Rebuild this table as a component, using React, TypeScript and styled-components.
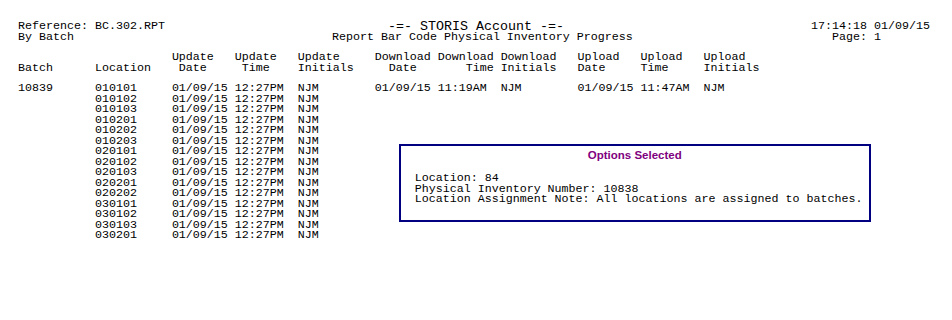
import React from "react";
import styled, { createGlobalStyle } from "styled-components";

const GlobalStyle = createGlobalStyle`
  html, body { margin: 0; padding: 0; background: #ffffff; }
  body { font-family: "Liberation Mono", "Courier New", monospace; color: #000000; }
`;

const Page = styled.div`
  width: 952px;
  height: 320px;
  box-sizing: border-box;
  padding: 21px 0 0 18px;
  font-family: "Liberation Mono", "Courier New", monospace;
  font-size: 11.6667px;
  color: #000;
  white-space: pre;
`;

const Masthead = styled.div`
  display: grid;
  grid-template-columns: 314px 479px auto;
  line-height: 11px;
`;

const MastColumn = styled.div`
  display: flex;
  flex-direction: column;
  align-items: flex-start;
`;

const Title = styled.div`
  font-size: 13.3333px;
  margin-left: 56px;
`;

const Line = styled.div<{ $indent?: number }>`
  padding-left: ${(p) => p.$indent ?? 0}ch;
`;

const Columns = "11ch 11ch 9ch 9ch 11ch 9ch 9ch 11ch 9ch 9ch auto";

const HeaderGrid = styled.div`
  display: grid;
  grid-template-columns: ${Columns};
  margin-top: 9px;
  line-height: 11px;
`;

const HeaderCell = styled.div`
  display: flex;
  flex-direction: column;
`;

const RowGrid = styled.div`
  display: grid;
  grid-template-columns: ${Columns};
  margin-top: 9.3px;
  line-height: 10.5px;
`;

const Lower = styled.div`
  display: flex;
  align-items: flex-start;
`;

const LocationGrid = styled.div`
  display: grid;
  grid-template-columns: 11ch 11ch 9ch 9ch 11ch;
  grid-auto-rows: 10.5px;
  line-height: 10.5px;
`;

const Cell = styled.div``;

const OptionsBox = styled.div`
  margin: 50px 0 0 24px;
  width: 472px;
  box-sizing: border-box;
  border: 2px solid #000080;
  padding: 2px 0 15px 14px;
  display: flex;
  flex-direction: column;
`;

const OptionsTitle = styled.div`
  font-family: "Liberation Sans", Arial, sans-serif;
  font-weight: bold;
  font-size: 11.5px;
  line-height: 14px;
  color: #800080;
  text-align: center;
  margin-left: -14px;
  margin-bottom: 11.6px;
`;

const OptionsLine = styled.div`
  line-height: 10.5px;
`;

const headers: [string, string, number][] = [
  ["", "Batch", 0],
  ["", "Location", 0],
  ["Update", "Date", 1],
  ["Update", "Time", 1],
  ["Update", "Initials", 0],
  ["Download", "Date", 2],
  ["Download", "Time", 4],
  ["Download", "Initials", 0],
  ["Upload", "Date", 0],
  ["Upload", "Time", 0],
  ["Upload", "Initials", 0],
];

const firstRow = [
  "10839",
  "010101",
  "01/09/15",
  "12:27PM",
  "NJM",
  "01/09/15",
  "11:19AM",
  "NJM",
  "01/09/15",
  "11:47AM",
  "NJM",
];

const locations = [
  "010102",
  "010103",
  "010201",
  "010202",
  "010203",
  "020101",
  "020102",
  "020103",
  "020201",
  "020202",
  "030101",
  "030102",
  "030103",
  "030201",
];

export default function App() {
  return (
    <>
      <GlobalStyle />
      <Page>
        <Masthead>
          <MastColumn>
            <Line>Reference: BC.302.RPT</Line>
            <Line>By Batch</Line>
          </MastColumn>
          <MastColumn>
            <Title>-=- STORIS Account -=-</Title>
            <Line>Report Bar Code Physical Inventory Progress</Line>
          </MastColumn>
          <MastColumn>
            <Line>17:14:18 01/09/15</Line>
            <Line $indent={3}>Page: 1</Line>
          </MastColumn>
        </Masthead>

        <HeaderGrid>
          {headers.map(([top, bottom, indent], i) => (
            <HeaderCell key={i}>
              <Line>{top || " "}</Line>
              <Line $indent={indent}>{bottom}</Line>
            </HeaderCell>
          ))}
        </HeaderGrid>

        <RowGrid>
          {firstRow.map((v, i) => (
            <Cell key={i}>{v}</Cell>
          ))}
        </RowGrid>

        <Lower>
          <LocationGrid>
            {locations.map((loc) => (
              <React.Fragment key={loc}>
                <Cell />
                <Cell>{loc}</Cell>
                <Cell>01/09/15</Cell>
                <Cell>12:27PM</Cell>
                <Cell>NJM</Cell>
              </React.Fragment>
            ))}
          </LocationGrid>
          <OptionsBox>
            <OptionsTitle>Options Selected</OptionsTitle>
            <OptionsLine>Location: 84</OptionsLine>
            <OptionsLine>Physical Inventory Number: 10838</OptionsLine>
            <OptionsLine>Location Assignment Note: All locations are assigned to batches.</OptionsLine>
          </OptionsBox>
        </Lower>
      </Page>
    </>
  );
}
